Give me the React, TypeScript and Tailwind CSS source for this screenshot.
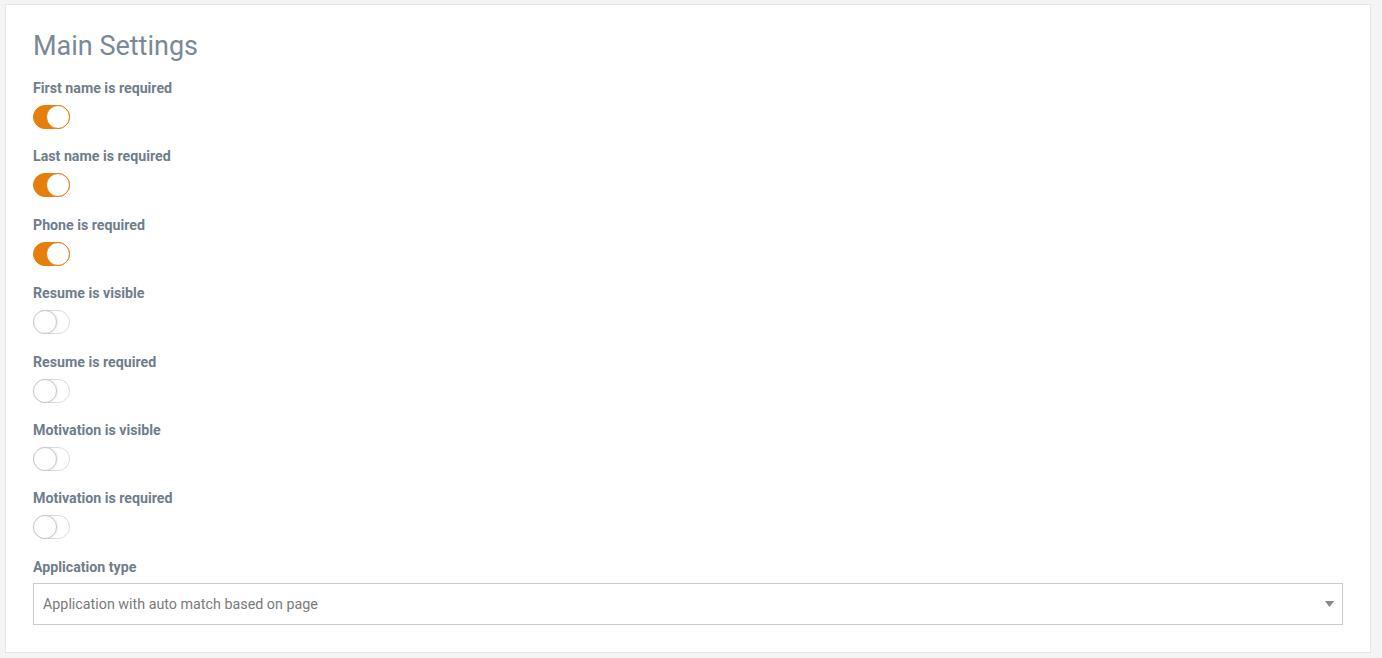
import React, { useState } from "react";

const items = [
  { label: "First name is required", on: true },
  { label: "Last name is required", on: true },
  { label: "Phone is required", on: true },
  { label: "Resume is visible", on: false },
  { label: "Resume is required", on: false },
  { label: "Motivation is visible", on: false },
  { label: "Motivation is required", on: false },
];

const Toggle = ({ on, onClick }: { on: boolean; onClick: () => void }) => (
  <button
    type="button"
    onClick={onClick}
    className={`relative block w-[37px] h-[24px] rounded-full border ${
      on ? "bg-[#e67e0c] border-[#e67e0c]" : "bg-white border-[#dcdcdc]"
    }`}
  >
    <span
      className={`absolute top-[-1px] w-[24px] h-[24px] rounded-full bg-white border ${
        on ? "left-[12px] border-[#e67e0c]" : "left-[-1px] border-[#c8c8c8] shadow-[1px_0_2px_rgba(0,0,0,0.08)]"
      }`}
    />
  </button>
);

export default function App() {
  const [state, setState] = useState(items.map((i) => i.on));

  return (
    <div className="min-h-[658px] bg-[#f4f4f4] pt-[4px] pb-[6px] pl-[5px] pr-[11px] font-['Roboto',sans-serif]">
      <div className="bg-white border border-[#e6e6e6] px-[27px] pt-[25px] pb-[27px]">
        <h2 className="text-[27px] leading-[32px] text-[#7a8898] mb-[16px]">Main Settings</h2>
        {items.map((item, i) => (
          <div key={item.label} className="mb-[17.4px]">
            <div className="text-[14.2px] leading-[20px] font-bold text-[#6f7d8c] mb-[7px]">{item.label}</div>
            <Toggle
              on={state[i]}
              onClick={() => setState((s) => s.map((v, j) => (j === i ? !v : v)))}
            />
          </div>
        ))}
        <div className="text-[14.2px] leading-[20px] font-bold text-[#6f7d8c] mb-[6px]">Application type</div>
        <div className="relative">
          <select className="w-full h-[42px] appearance-none border border-[#cccccc] bg-white pl-[9px] pr-8 pt-[2px] text-[14.3px] text-[#7a7a7a] outline-none">
            <option>Application with auto match based on page</option>
            <option>Application without match</option>
          </select>
          <svg
            className="absolute right-[9px] top-[18px] pointer-events-none"
            width="9"
            height="6"
            viewBox="0 0 9 6"
          >
            <path d="M0 0h9L4.5 6z" fill="#888888" />
          </svg>
        </div>
      </div>
    </div>
  );
}
